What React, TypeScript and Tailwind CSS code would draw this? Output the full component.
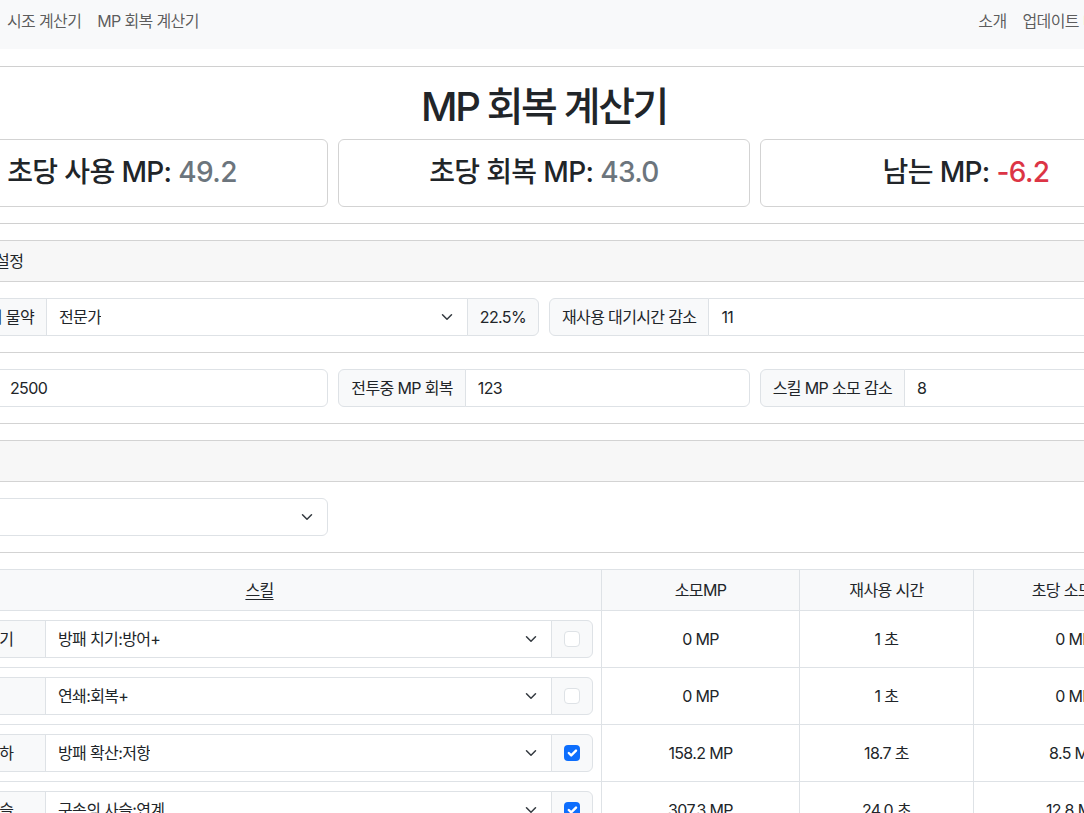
import type { ReactNode } from "react";

const FONT = "font-['Inter','Noto_Sans_CJK_KR',sans-serif]";

function Chevron() {
  return (
    <svg width="16" height="12" viewBox="0 0 16 16" className="shrink-0">
      <path
        d="m2 5 6 6 6-6"
        fill="none"
        stroke="#343a40"
        strokeWidth="2"
        strokeLinecap="round"
        strokeLinejoin="round"
      />
    </svg>
  );
}

function Check({ checked }: { checked: boolean }) {
  if (!checked) {
    return <span className="block size-4 rounded-[4px] border border-[#dee2e6] bg-white" />;
  }
  return (
    <span className="flex size-4 items-center justify-center rounded-[4px] bg-[#0d6efd]">
      <svg width="16" height="16" viewBox="0 0 20 20">
        <path
          d="m6 10 3 3 6-6"
          fill="none"
          stroke="#fff"
          strokeWidth="3"
          strokeLinecap="round"
          strokeLinejoin="round"
        />
      </svg>
    </span>
  );
}

function Addon({ children, className = "" }: { children: ReactNode; className?: string }) {
  return (
    <span
      className={`flex shrink-0 items-center whitespace-nowrap border border-[#dee2e6] bg-[#f8f9fa] px-3 ${className}`}
    >
      {children}
    </span>
  );
}

function SelectBox({ value, className = "" }: { value: string; className?: string }) {
  return (
    <div
      className={`flex min-w-0 flex-1 items-center justify-between border border-[#dee2e6] bg-white pl-3 pr-3 ${className}`}
    >
      <span className="truncate">{value}</span>
      <Chevron />
    </div>
  );
}

function TextInput({ value, className = "" }: { value: string; className?: string }) {
  return (
    <div className={`flex min-w-0 flex-1 items-center border border-[#dee2e6] bg-white px-3 ${className}`}>
      {value}
    </div>
  );
}

function Navbar() {
  return (
    <nav className="h-[49px] bg-[#f8f9fa]">
      <div className="flex px-4 pt-[9px] text-[rgba(0,0,0,0.65)]">
        <span className="w-[83px] overflow-hidden whitespace-nowrap text-[#212529]">POE2 도구</span>
        <a className="px-2 leading-6">시조 계산기</a>
        <a className="px-2 leading-6">MP 회복 계산기</a>
        <div className="ml-auto flex pr-[9px]">
          <a className="px-2 leading-6">소개</a>
          <a className="px-2 leading-6">업데이트 내역</a>
          <a className="px-2 leading-6">문의</a>
        </div>
      </div>
    </nav>
  );
}

function Summary({ label, value, tone }: { label: string; value: string; tone: string }) {
  return (
    <div className="rounded-md border border-[#d3d3d3] p-4">
      <h3 className="text-center text-[28px] font-medium leading-[1.2]">
        {label} <span className={tone}>{value}</span>
      </h3>
    </div>
  );
}

const SKILLS = [
  { label: "대방패 치기", support: "방패 치기:방어+", mp: "0 MP", cd: "1 초", per: "0 MP", on: false },
  { label: "연쇄", support: "연쇄:회복+", mp: "0 MP", cd: "1 초", per: "0 MP", on: false },
  { label: "방패 급강하", support: "방패 확산:저항", mp: "158.2 MP", cd: "18.7 초", per: "8.5 MP", on: true },
  { label: "구속의 사슬", support: "구속의 사슬:연계", mp: "307.3 MP", cd: "24.0 초", per: "12.8 MP", on: true },
];

function SkillTable() {
  return (
    <table className="w-full table-fixed border-collapse">
      <colgroup>
        <col className="w-[684px]" />
        <col className="w-[198px]" />
        <col className="w-[174px]" />
        <col className="w-[200px]" />
      </colgroup>
      <thead>
        <tr className="h-[41px] bg-[#f8f9fa]">
          <th className="border border-[#dee2e6] px-2 font-normal">
            <span className="underline underline-offset-[3px]">스킬</span>
          </th>
          <th className="border border-[#dee2e6] px-2 font-normal">소모MP</th>
          <th className="border border-[#dee2e6] px-2 font-normal">재사용 시간</th>
          <th className="border border-[#dee2e6] px-2 font-normal whitespace-nowrap">초당 소모MP</th>
        </tr>
      </thead>
      <tbody>
        {SKILLS.map((s) => (
          <tr key={s.support} className="h-[57px]">
            <td className="border border-[#dee2e6] px-2">
              <div className="flex h-[38px]">
                <Addon className="w-[120px] overflow-hidden rounded-l-md">{s.label}</Addon>
                <SelectBox value={s.support} className="-ml-px" />
                <span className="-ml-px flex w-[42px] shrink-0 items-center justify-center rounded-r-md border border-[#dee2e6] bg-[#f8f9fa]">
                  <Check checked={s.on} />
                </span>
              </div>
            </td>
            <td className="border border-[#dee2e6] px-2 text-center">{s.mp}</td>
            <td className="border border-[#dee2e6] px-2 text-center">{s.cd}</td>
            <td className="border border-[#dee2e6] px-2 text-center">{s.per}</td>
          </tr>
        ))}
      </tbody>
    </table>
  );
}

export default function App() {
  return (
    <div
      className={`h-[813px] w-[1084px] overflow-hidden bg-white text-base tracking-[-0.04em] text-[#212529] ${FONT}`}
    >
      <div className="-ml-[100px] w-[1288px]">
        <Navbar />
        <main>
          <hr className="mt-[17px] border-t border-[#d0d0d0]" />
          <h1 className="mt-4 mb-2 text-center text-[40px] font-medium leading-[1.2] tracking-[-0.06em]">
            MP 회복 계산기
          </h1>
          <div className="grid grid-cols-3 gap-[10px] px-4">
            <Summary label="초당 사용 MP:" value="49.2" tone="text-[#6c757d]" />
            <Summary label="초당 회복 MP:" value="43.0" tone="text-[#6c757d]" />
            <Summary label="남는 MP:" value="-6.2" tone="text-[#dc3545]" />
          </div>
          <hr className="mt-4 border-t border-[#d0d0d0]" />

          {/* 캐릭터 설정 */}
          <section className="mt-4 rounded-md border border-[#d3d3d3]">
            <div className="border-b border-[#d3d3d3] bg-[#f7f7f7] px-4 py-2 leading-6">캐릭터 스탯 설정</div>
            <div className="border-b border-[#d3d3d3] p-4">
              <div className="grid grid-cols-2 gap-[10px]">
                <div className="flex h-[38px]">
                  <Addon className="w-[130px] justify-end overflow-hidden rounded-l-md">마나 회복의 물약</Addon>
                  <SelectBox value="전문가" className="-ml-px" />
                  <Addon className="-ml-px rounded-r-md">22.5%</Addon>
                </div>
                <div className="flex h-[38px]">
                  <Addon className="rounded-l-md">재사용 대기시간 감소</Addon>
                  <TextInput value="11" className="-ml-px rounded-r-md" />
                </div>
              </div>
            </div>
            <div className="p-4">
              <div className="grid grid-cols-3 gap-[10px]">
                <div className="flex h-[38px]">
                  <Addon className="w-[81px] overflow-hidden rounded-l-md">최대 MP</Addon>
                  <TextInput value="2500" className="-ml-px rounded-r-md" />
                </div>
                <div className="flex h-[38px]">
                  <Addon className="rounded-l-md">전투중 MP 회복</Addon>
                  <TextInput value="123" className="-ml-px rounded-r-md" />
                </div>
                <div className="flex h-[38px]">
                  <Addon className="rounded-l-md">스킬 MP 소모 감소</Addon>
                  <TextInput value="8" className="-ml-px rounded-r-md" />
                </div>
              </div>
            </div>
          </section>

          {/* 스킬 */}
          <section className="mt-4 rounded-md border border-[#d3d3d3]">
            <div className="border-b border-[#d3d3d3] bg-[#f7f7f7] px-4 py-2 leading-6">스킬</div>
            <div className="border-b border-[#d3d3d3] p-4">
              <div className="grid grid-cols-3 gap-[10px]">
                <div className="flex h-[38px]">
                  <SelectBox value="전사" className="rounded-md" />
                </div>
              </div>
            </div>
            <div className="p-4">
              <SkillTable />
            </div>
          </section>
        </main>
      </div>
    </div>
  );
}
